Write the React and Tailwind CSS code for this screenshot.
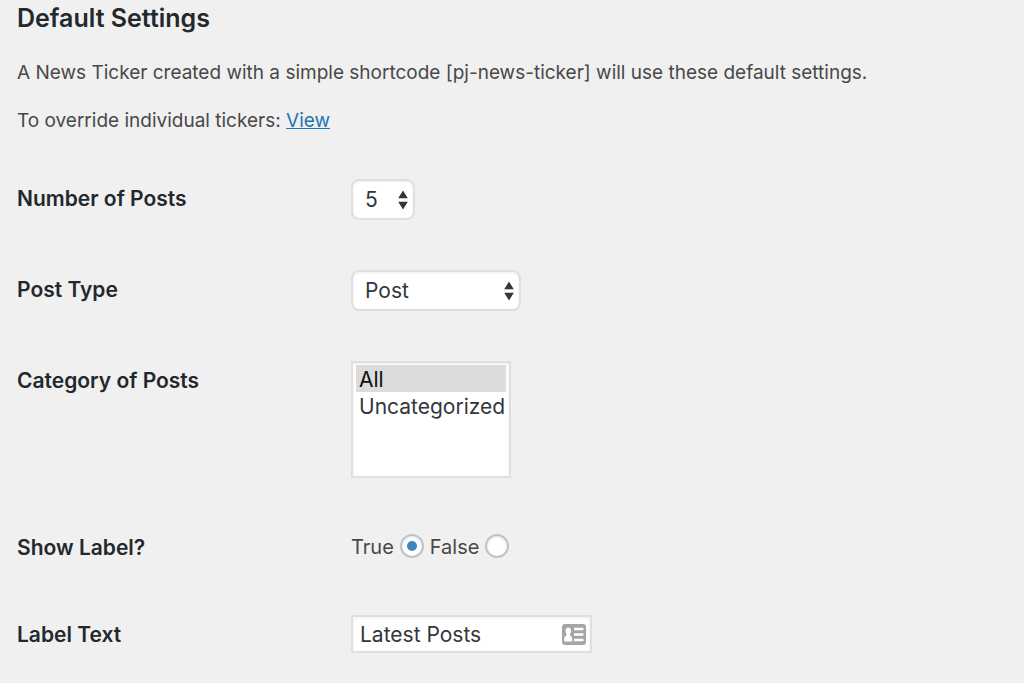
import React, { useState } from 'react';

const fieldBorder = 'border-2 border-[#dfdfdf] bg-white text-[21px] text-[#32373c] shadow-[inset_0_1px_3px_rgba(0,0,0,0.07)]';

const optionClass = 'h-[27px] pt-0.5 pr-0 pb-0 pl-[3px] checked:bg-linear-to-r checked:from-[#dcdcdc] checked:to-[#dcdcdc]';

const radioClass =
  'mb-0.5 grid size-6 shrink-0 appearance-none place-items-center rounded-full border-2 border-[#bfc3c7] bg-white shadow-[inset_0_1px_3px_rgba(0,0,0,0.1)] before:size-2.5 before:rounded-full checked:before:bg-[#3b88bb]';

export default function App() {
  const [count, setCount] = useState('5');
  const [postType, setPostType] = useState('post');
  const [categories, setCategories] = useState(['all']);
  const [showLabel, setShowLabel] = useState(true);
  const [labelText, setLabelText] = useState('Latest Posts');

  return (
    <main className="min-h-screen bg-[#f0f0f0] px-[17px] pt-1 pb-[30px] font-['Inter',sans-serif] text-[19px] leading-7 text-[#484848]">
      <h2 className="text-[25px] leading-7 font-semibold text-[#23282d]">Default Settings</h2>
      <p className="mt-[27px]">
        A News Ticker created with a simple shortcode [pj-news-ticker] will use these default settings.
      </p>
      <p className="mt-5">
        To override individual tickers:{' '}
        <a href="#view" className="text-[#1f76af] underline">View</a>
      </p>

      <form className="mt-11 space-y-[50px]" onSubmit={(e) => e.preventDefault()}>
        <Row label="Number of Posts" htmlFor="count">
          <Dropdown id="count" className="w-16" value={count} onChange={setCount}>
            {['1', '2', '3', '4', '5', '6', '7', '8', '9'].map((n) => (
              <option key={n} value={n}>{n}</option>
            ))}
          </Dropdown>
        </Row>

        <Row label="Post Type" htmlFor="post-type">
          <Dropdown id="post-type" className="w-[170px]" value={postType} onChange={setPostType}>
            <option value="post">Post</option>
            <option value="page">Page</option>
          </Dropdown>
        </Row>

        <Row label="Category of Posts" htmlFor="categories">
          <select
            id="categories"
            multiple
            size={4}
            value={categories}
            onChange={(e) => setCategories(Array.from(e.target.selectedOptions, (o) => o.value))}
            className={`block h-[117px] w-40 overflow-hidden px-[3px] py-0.5 ${fieldBorder}`}
          >
            <option value="all" className={optionClass}>All</option>
            <option value="uncategorized" className={optionClass}>Uncategorized</option>
          </select>
        </Row>

        <fieldset className="flex text-[20px]">
          <legend className="float-left w-[334px] shrink-0 pt-1.5 text-[21px] leading-7 font-semibold text-[#23282d]">
            Show Label?
          </legend>
          <div className="flex h-[37px] items-center gap-1.5">
            <label htmlFor="label-true">True</label>
            <input id="label-true" type="radio" name="show-label" checked={showLabel} onChange={() => setShowLabel(true)} className={radioClass} />
            <label htmlFor="label-false">False</label>
            <input id="label-false" type="radio" name="show-label" checked={!showLabel} onChange={() => setShowLabel(false)} className={radioClass} />
          </div>
        </fieldset>

        <Row label="Label Text" htmlFor="label-text">
          <div className="relative w-[241px]">
            <input
              id="label-text"
              type="text"
              value={labelText}
              onChange={(e) => setLabelText(e.target.value)}
              className={`block h-[38px] w-full pr-9 pl-[7px] ${fieldBorder}`}
            />
            <ContactIcon />
          </div>
        </Row>
      </form>
    </main>
  );
}

function Row({ label, htmlFor, children }) {
  return (
    <div className="flex">
      <label htmlFor={htmlFor} className="w-[334px] shrink-0 pt-1.5 text-[21px] leading-7 font-semibold text-[#23282d]">
        {label}
      </label>
      {children}
    </div>
  );
}

function Dropdown({ id, className, value, onChange, children }) {
  return (
    <div className={`relative ${className}`}>
      <select
        id={id}
        value={value}
        onChange={(e) => onChange(e.target.value)}
        className={`block h-[41px] w-full appearance-none rounded-lg pr-6 pl-3 ${fieldBorder}`}
      >
        {children}
      </select>
      <svg viewBox="0 0 10 20" className="pointer-events-none absolute top-[11px] right-[7px] h-5 w-2.5" fill="#32373c">
        <path d="M5 0.5 9.8 8.2H0.2ZM5 19.5 9.8 11.8H0.2Z" />
      </svg>
    </div>
  );
}

// autofill contact card shown at the end of the text box
function ContactIcon() {
  return (
    <svg viewBox="0 0 24 21" className="pointer-events-none absolute top-[9px] right-[6px] h-[21px] w-6">
      <rect width="24" height="21" rx="3" fill="#a5a5a5" />
      <path
        d="M6.3 3.6C4.8 3.6 3.6 4.8 3.6 6.8 3.6 8.4 4.1 9.6 4.8 10.3 4.7 11.8 2.2 12.1 2.2 15V17.4H10.2V15C10.2 12.1 7.9 11.8 7.8 10.3 8.5 9.6 9 8.4 9 6.8 9 4.8 7.8 3.6 6.3 3.6Z"
        fill="#fff"
      />
      <path d="M12 5H21.5M12 10.5H21.5M12 16H21.5" stroke="#fff" strokeWidth="2.4" />
    </svg>
  );
}
